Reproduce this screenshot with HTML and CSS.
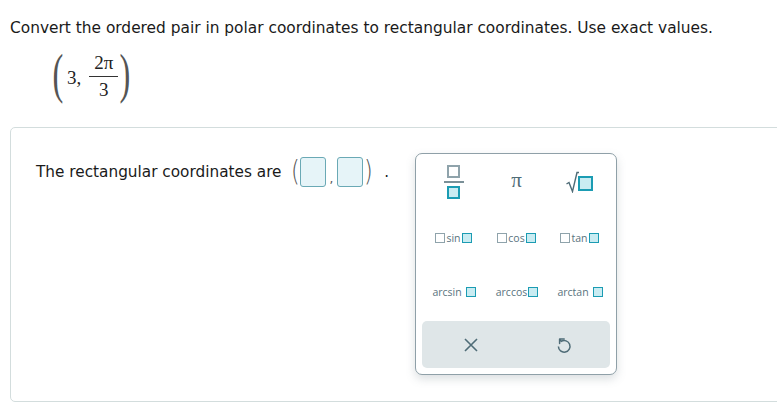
FILE: index.html
```html
<!DOCTYPE html>
<html>
<head>
<meta charset="utf-8">
<link rel="stylesheet" href="styles.css">
</head>
<body>
<div class="prompt">Convert the ordered pair in polar coordinates to rectangular coordinates. Use exact values.</div>
<div class="given">
  <span class="bigparen left">(</span>
  <span class="num">3,</span>
  <span class="frac"><span class="fnum">2π</span><span class="fden">3</span></span>
  <span class="bigparen">)</span>
</div>
<div class="card">
  <div class="answer">
    <span class="label">The rectangular coordinates are</span>
    <span class="paren">(</span>
    <span class="box"></span>
    <span class="comma">,</span>
    <span class="box"></span>
    <span class="paren">)</span>
    <span class="dot">.</span>
  </div>
  <div class="keypad">
    <div class="keys">
      <div class="key">
        <span class="fracicon"><span class="gbox big"></span><span class="fline"></span><span class="tbox big"></span></span>
      </div>
      <div class="key pi">π</div>
      <div class="key">
        <span class="sqrticon">
          <svg width="13" height="22" viewBox="0 0 13 22"><path d="M0.5 13 L3 11.5 L6.5 20.5 L11 1.5 L13 1.5" fill="none" stroke="#4f6c77" stroke-width="1.4"/></svg>
          <span class="tbox sq"></span>
        </span>
      </div>
      <div class="key fn"><span class="gbox"></span><span class="ft">sin</span><span class="tbox"></span></div>
      <div class="key fn"><span class="gbox"></span><span class="ft">cos</span><span class="tbox"></span></div>
      <div class="key fn"><span class="gbox"></span><span class="ft">tan</span><span class="tbox"></span></div>
      <div class="key fn"><span class="ft">arcsin</span><span class="tbox sp"></span></div>
      <div class="key fn"><span class="ft">arccos</span><span class="tbox"></span></div>
      <div class="key fn"><span class="ft">arctan</span><span class="tbox sp"></span></div>
    </div>
    <div class="actions">
      <div class="act">
        <svg width="14" height="14" viewBox="0 0 14 14"><path d="M1 1 L13 13 M13 1 L1 13" stroke="#4f6c77" stroke-width="1.6" fill="none"/></svg>
      </div>
      <div class="act">
        <svg width="16" height="19" viewBox="0 0 16 19"><path d="M2.4 11.5 A5.8 5.8 0 1 0 5.2 6.4 L3.6 4.2" fill="none" stroke="#4f6c77" stroke-width="1.5" stroke-linejoin="round"/><path d="M3.6 8.6 L3.6 4 L8.2 4" fill="none" stroke="#4f6c77" stroke-width="1.5" stroke-linecap="round" stroke-linejoin="round"/></svg>
      </div>
    </div>
  </div>
</div>
</body>
</html>
```
FILE: styles.css
```css
html, body {
  margin: 0;
  padding: 0;
  background: #ffffff;
  overflow: hidden;
}
body {
  font-family: "DejaVu Sans", Verdana, sans-serif;
  color: #1a1a1a;
  width: 777px;
  height: 411px;
}
.prompt {
  font-size: 15.4px;
  padding: 18px 0 0 10px;
  line-height: 20px;
  white-space: nowrap;
}
.given {
  display: flex;
  align-items: center;
  margin: 13px 0 0 52px;
  height: 50px;
  font-family: "Liberation Serif", "Times New Roman", serif;
  color: #222;
}
.bigparen {
  font-size: 54px;
  font-weight: normal;
  transform: scaleX(0.6);
  color: #555;
  line-height: 50px;
  position: relative;
  top: -2px;
  margin: 0 -3px 0 -2px;
}
.bigparen.left {
  margin: 0 0 0 -3px;
}
.num {
  font-size: 19px;
  margin: 0 8px 0 0;
  padding-top: 4px;
}
.frac {
  display: flex;
  flex-direction: column;
  align-items: center;
  font-size: 19px;
  line-height: 20px;
}
.fnum {
  border-bottom: 1px solid #333;
  padding: 0 5px 3px;
}
.fden {
  padding-top: 3px;
}
.card {
  position: relative;
  margin: 26px 0 0 10px;
  width: 790px;
  height: 275px;
  border: 1px solid #d3dddd;
  border-radius: 5px;
  box-sizing: border-box;
}
.answer {
  display: flex;
  align-items: center;
  padding: 28px 0 0 25px;
  height: 32px;
}
.label {
  font-size: 15.3px;
  margin-right: 8px;
}
.paren {
  font-size: 28px;
  font-family: "DejaVu Sans", sans-serif;
  font-weight: 200;
  color: #555;
  transform: scaleX(0.8);
  line-height: 30px;
}
.box {
  width: 24px;
  height: 28px;
  border: 1.5px solid #6aa9b5;
  background: #e6f4f8;
  border-radius: 3px;
}
.comma {
  font-size: 12px;
  align-self: flex-end;
  margin: 0 4px 2px 3px;
  color: #555;
}
.dot {
  margin-left: 10px;
  font-size: 15px;
}
.keypad {
  position: absolute;
  left: 404px;
  top: 25px;
  width: 202px;
  height: 222px;
  box-sizing: border-box;
  border: 1px solid #8fa0a8;
  border-radius: 7px;
  background: #fff;
  box-shadow: 0 4px 10px rgba(90, 110, 120, 0.22);
  padding: 0 6px 6px;
  display: flex;
  flex-direction: column;
  font-family: "Open Sans", sans-serif;
  color: #5a737e;
}
.keys {
  display: grid;
  grid-template-columns: 63px 63px 63px;
  grid-template-rows: 56px 56px 52px;
  flex: 1;
}
.key {
  display: flex;
  align-items: center;
  justify-content: center;
}
.pi {
  font-family: "Liberation Serif", serif;
  font-size: 21px;
  padding-bottom: 4px;
  color: #4f6c77;
}
.fracicon {
  display: flex;
  flex-direction: column;
  align-items: center;
}
.fline {
  width: 20px;
  height: 2px;
  background: #7b9098;
  margin: 3px 0;
}
.gbox {
  display: inline-block;
  width: 8px;
  height: 8px;
  border: 1.5px solid #8fa3ab;
  background: #fff;
}
.tbox {
  display: inline-block;
  width: 8px;
  height: 8px;
  border: 1.5px solid #1b9cb3;
  background: #c9ecf2;
}
.gbox.big, .tbox.big {
  width: 9px;
  height: 9px;
  border-width: 2px;
}
.sqrticon {
  display: flex;
  align-items: flex-end;
}
.sqrticon svg {
  margin-right: -1px;
}
.tbox.sq {
  width: 11px;
  height: 11px;
  border-width: 2px;
  margin-bottom: 1px;
  position: relative;
  top: -1px;
}
.fn {
  font-size: 10.5px;
}
.fn .ft {
  margin: 0 1px;
}
.fn .tbox.sp {
  margin-left: 3px;
}
.actions {
  height: 47px;
  background: #dfe6e8;
  border-radius: 5px;
  display: flex;
}
.act {
  flex: 1;
  display: flex;
  align-items: center;
  justify-content: center;
}
.act:first-child {
  padding-left: 2px;
}
```
